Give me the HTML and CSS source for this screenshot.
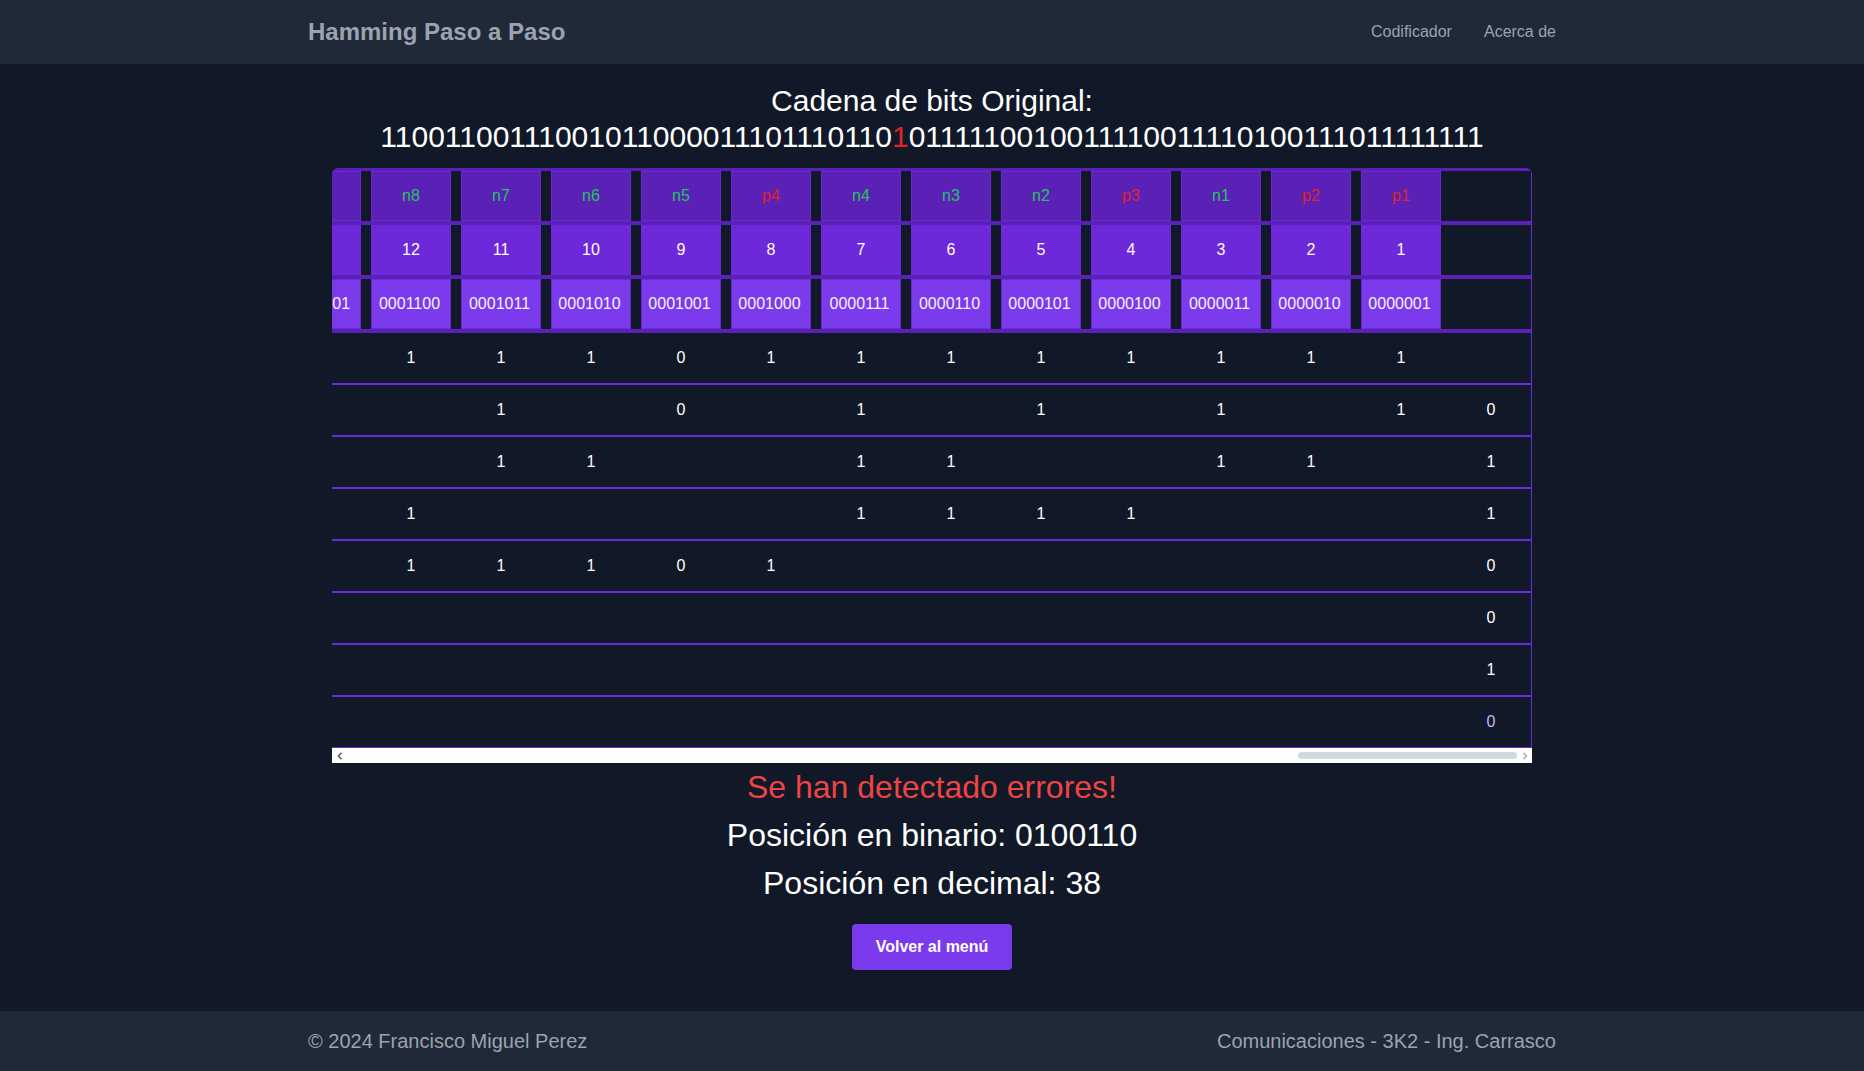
FILE: index.html
```html
<!DOCTYPE html>
<html lang="es">
<head>
<meta charset="utf-8">
<title>Hamming Paso a Paso</title>
<link rel="stylesheet" href="styles.css">
</head>
<body>
<nav class="nav">
  <div class="nav-inner">
    <span class="brand">Hamming Paso a Paso</span>
    <div class="links">
      <a class="link">Codificador</a>
      <a class="link">Acerca de</a>
    </div>
  </div>
</nav>

<main class="main">
  <h2 class="title">Cadena de bits Original:<br>11001100111001011000011101110110<span class="bit-err">1</span>0111110010011110011110100111011111111</h2>

  <div class="table-wrap">
    <table class="htable">
      <tr class="row-head">
        <td><div class="box b-label g">n9</div></td>
        <td><div class="box b-label g">n8</div></td>
        <td><div class="box b-label g">n7</div></td>
        <td><div class="box b-label g">n6</div></td>
        <td><div class="box b-label g">n5</div></td>
        <td><div class="box b-label r">p4</div></td>
        <td><div class="box b-label g">n4</div></td>
        <td><div class="box b-label g">n3</div></td>
        <td><div class="box b-label g">n2</div></td>
        <td><div class="box b-label r">p3</div></td>
        <td><div class="box b-label g">n1</div></td>
        <td><div class="box b-label r">p2</div></td>
        <td><div class="box b-label r">p1</div></td>
        <td></td>
      </tr>
      <tr class="row-head">
        <td><div class="box b-num">13</div></td>
        <td><div class="box b-num">12</div></td>
        <td><div class="box b-num">11</div></td>
        <td><div class="box b-num">10</div></td>
        <td><div class="box b-num">9</div></td>
        <td><div class="box b-num">8</div></td>
        <td><div class="box b-num">7</div></td>
        <td><div class="box b-num">6</div></td>
        <td><div class="box b-num">5</div></td>
        <td><div class="box b-num">4</div></td>
        <td><div class="box b-num">3</div></td>
        <td><div class="box b-num">2</div></td>
        <td><div class="box b-num">1</div></td>
        <td></td>
      </tr>
      <tr class="row-head">
        <td><div class="box b-bin">0001101</div></td>
        <td><div class="box b-bin">0001100</div></td>
        <td><div class="box b-bin">0001011</div></td>
        <td><div class="box b-bin">0001010</div></td>
        <td><div class="box b-bin">0001001</div></td>
        <td><div class="box b-bin">0001000</div></td>
        <td><div class="box b-bin">0000111</div></td>
        <td><div class="box b-bin">0000110</div></td>
        <td><div class="box b-bin">0000101</div></td>
        <td><div class="box b-bin">0000100</div></td>
        <td><div class="box b-bin">0000011</div></td>
        <td><div class="box b-bin">0000010</div></td>
        <td><div class="box b-bin">0000001</div></td>
        <td></td>
      </tr>
      <tr class="row-body">
        <td>0</td><td>1</td><td>1</td><td>1</td><td>0</td><td>1</td><td>1</td><td>1</td><td>1</td><td>1</td><td>1</td><td>1</td><td>1</td><td></td>
      </tr>
      <tr class="row-body">
        <td>0</td><td></td><td>1</td><td></td><td>0</td><td></td><td>1</td><td></td><td>1</td><td></td><td>1</td><td></td><td>1</td><td>0</td>
      </tr>
      <tr class="row-body">
        <td></td><td></td><td>1</td><td>1</td><td></td><td></td><td>1</td><td>1</td><td></td><td></td><td>1</td><td>1</td><td></td><td>1</td>
      </tr>
      <tr class="row-body">
        <td>0</td><td>1</td><td></td><td></td><td></td><td></td><td>1</td><td>1</td><td>1</td><td>1</td><td></td><td></td><td></td><td>1</td>
      </tr>
      <tr class="row-body">
        <td>0</td><td>1</td><td>1</td><td>1</td><td>0</td><td>1</td><td></td><td></td><td></td><td></td><td></td><td></td><td></td><td>0</td>
      </tr>
      <tr class="row-body">
        <td></td><td></td><td></td><td></td><td></td><td></td><td></td><td></td><td></td><td></td><td></td><td></td><td></td><td>0</td>
      </tr>
      <tr class="row-body">
        <td></td><td></td><td></td><td></td><td></td><td></td><td></td><td></td><td></td><td></td><td></td><td></td><td></td><td>1</td>
      </tr>
      <tr class="row-body row-last">
        <td></td><td></td><td></td><td></td><td></td><td></td><td></td><td></td><td></td><td></td><td></td><td></td><td></td><td class="hl">0</td>
      </tr>
    </table>
  </div>
  <div class="scrollbar">
    <svg class="arrow" width="6" height="8" viewBox="0 0 6 8"><polyline points="4.5,0.8 1.5,4 4.5,7.2" fill="none" stroke="#5f5f5f" stroke-width="1.6"/></svg>
    <div class="thumb"></div>
    <svg class="arrow" width="6" height="8" viewBox="0 0 6 8"><polyline points="1.5,0.8 4.5,4 1.5,7.2" fill="none" stroke="#b4b4b4" stroke-width="1.6"/></svg>
  </div>

  <p class="result error">Se han detectado errores!</p>
  <p class="result pos">Posición en binario: 0100110</p>
  <p class="result pos">Posición en decimal: 38</p>
  <button class="btn">Volver al menú</button>
</main>

<footer class="footer">
  <div class="footer-inner">
    <span>© 2024 Francisco Miguel Perez</span>
    <span>Comunicaciones - 3K2 - Ing. Carrasco</span>
  </div>
</footer>
</body>
</html>
```

FILE: styles.css
```css
* {
  box-sizing: border-box;
  margin: 0;
  padding: 0;
}

body {
  font-family: "Liberation Sans", Arial, sans-serif;
  background: #111827;
  color: #ffffff;
  min-height: 100vh;
  display: flex;
  flex-direction: column;
}

.nav {
  background: #1f2937;
  height: 64px;
}

.nav-inner {
  max-width: 1280px;
  height: 100%;
  margin: 0 auto;
  padding: 0 16px;
  display: flex;
  align-items: center;
  justify-content: space-between;
}

.brand {
  font-size: 24px;
  line-height: 32px;
  font-weight: 700;
  color: #9ca3af;
}

.links {
  display: flex;
  gap: 32px;
}

.link {
  font-size: 16px;
  line-height: 24px;
  color: #9ca3af;
}

.main {
  flex: 1;
  display: flex;
  flex-direction: column;
  align-items: center;
  padding-top: 19px;
}

.title {
  font-size: 30px;
  line-height: 36px;
  font-weight: 400;
  text-align: center;
  color: #ffffff;
}

.bit-err {
  color: #dc2626;
}

.table-wrap {
  width: 1200px;
  margin-top: 13px;
  border-radius: 6px 6px 0 0;
  overflow: hidden;
  display: flex;
  justify-content: flex-end;
}

.htable {
  flex-shrink: 0;
  border-collapse: separate;
  border-spacing: 0;
  border-top: 3px solid #5b21b6;
  border-right: 1px solid #6d28d9;
}

.htable td {
  width: 90px;
  padding: 0 0 0 10px;
  font-size: 16px;
  text-align: center;
  vertical-align: middle;
}

.row-head td {
  height: 54px;
  border-bottom: 4px solid #5b21b6;
}

.box {
  width: 80px;
  height: 50px;
  display: flex;
  align-items: center;
  justify-content: center;
  border: 1px solid #6d28d9;
  white-space: nowrap;
}

.b-label {
  background: #5b21b6;
}

.b-num {
  background: #6d28d9;
  border-color: #6d28d9;
  color: #ffffff;
}

.b-bin {
  background: #7c3aed;
  border-color: #6d28d9;
  color: #f5f3ff;
  padding-right: 3px;
}

.g {
  color: #22c55e;
}

.r {
  color: #dc2626;
}

.row-body td {
  height: 52px;
  border-bottom: 2px solid #6d28d9;
  color: #ffffff;
}

.row-last td {
  height: 51px;
  border-bottom-width: 1px;
}

.hl {
  color: #c4b5fd !important;
}

.scrollbar {
  width: 1200px;
  height: 15px;
  background: #ffffff;
  display: flex;
  align-items: center;
  padding: 0 4px 0 5px;
}

.arrow {
  display: block;
  flex-shrink: 0;
}

.thumb {
  margin-left: auto;
  margin-right: 5px;
  width: 219px;
  height: 7px;
  border-radius: 4px;
  background: #d1d9e1;
}

.result {
  font-size: 32px;
  line-height: 48px;
  text-align: center;
}

.error {
  color: #ef4444;
}

.pos {
  color: #ffffff;
}

.btn {
  margin-top: 17px;
  background: #7c3aed;
  color: #ffffff;
  border: none;
  border-radius: 4px;
  padding: 12px 24px;
  font-family: "Liberation Sans", Arial, sans-serif;
  font-size: 16px;
  line-height: 22px;
  font-weight: 700;
}

.footer {
  background: #1f2937;
  padding: 16px 0;
}

.footer-inner {
  max-width: 1280px;
  margin: 0 auto;
  padding: 0 16px;
  display: flex;
  justify-content: space-between;
  font-size: 20px;
  line-height: 28px;
  color: #9ca3af;
}
```
